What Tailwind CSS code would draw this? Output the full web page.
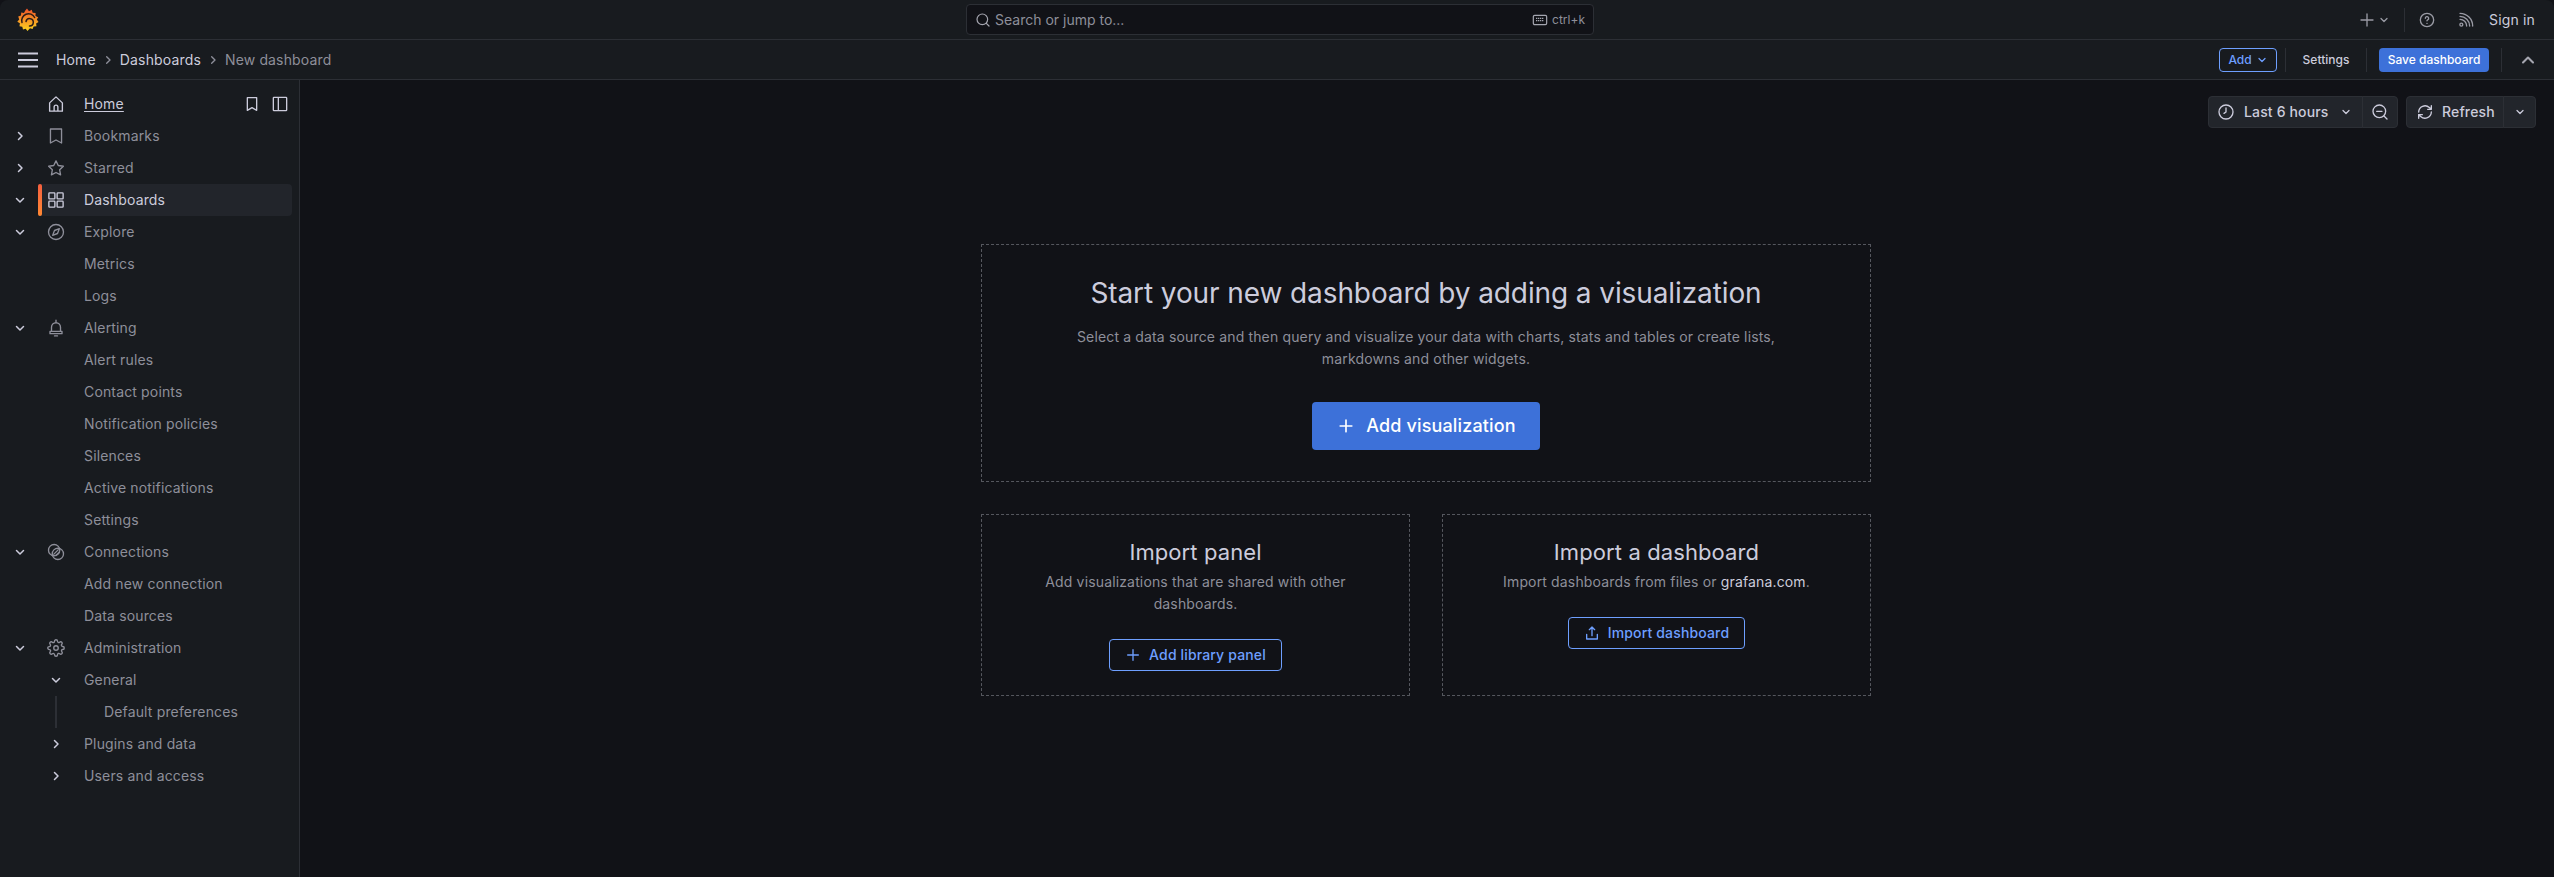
<!doctype html>
<html>
<head>
<meta charset="utf-8"/>
<title>New dashboard - Dashboards - Grafana</title>
<script src="https://cdn.jsdelivr.net/npm/@tailwindcss/browser@4"></script>
</head>
<body class="bg-[#111217] text-[#ccccdc] font-['Inter',sans-serif] text-sm tracking-[0.15px] overflow-hidden">
<div class="h-[877px] flex flex-col">

	<!-- top bar -->
	<div class="h-10 shrink-0 flex items-center bg-[#181b1f] border-b border-[#2c2f35] rounded-t-lg">
		<div class="w-[966px] pl-4 shrink-0">
			<svg class="w-6 h-6" viewBox="0 0 24 24">
				<defs><linearGradient id="gf" x1="0" y1="1" x2="0" y2="0"><stop offset="0" stop-color="#fcd51f"/><stop offset="1" stop-color="#f0532a"/></linearGradient></defs>
				<path fill="url(#gf)" d="M11 .5l2 2.800 2.700-1.500 1 3 2.900 .2-.1 2.900 2.700 1.300-1.400 2.400 1.700 2.300-2.400 1.500 .4 2.800-2.900 .3-1 2.600-2.600-.8L11.500 23 9.700 20.800 7 21.500 6.300 18.700 3.500 18.200 3.900 15.300 1.300 13.700 3.200 11.400 2.200 8.600 5 7.600 5.200 4.600 8 5 9.300 2.500z"/>
				<path fill="none" stroke="#2b1c18" stroke-width="1.500" stroke-linecap="round" d="M6 14.500A6.800 6.800 0 0 1 18.600 9.500"/>
				<path fill="none" stroke="#2b1c18" stroke-width="1.500" stroke-linecap="round" d="M10 13.500A3.700 3.700 0 1 1 13.500 18"/>
			</svg>
		</div>
		<div class="w-[628px] h-[31px] shrink-0 flex items-center justify-between px-2 bg-[#111217] border border-[#2c2f35] rounded-sm text-[#8e8f9a] tracking-normal">
			<div class="flex items-center gap-1">
				<svg class="w-4 h-4" viewBox="0 0 24 24" fill="none" stroke="#a5a6b0" stroke-width="1.800" stroke-linecap="round"><circle cx="11" cy="11" r="8"/><path d="M17 17l4 4"/></svg>
				<span>Search or jump to...</span>
			</div>
			<div class="flex items-center gap-1 text-xs">
				<svg class="w-4 h-4" viewBox="0 0 24 24" fill="none" stroke="#a5a6b0" stroke-width="1.800"><rect x="2" y="5" width="20" height="14" rx="2"/><path d="M6 9.500h12M6 13h12" stroke-dasharray="2 1"/></svg>
				<span>ctrl+k</span>
			</div>
		</div>
		<div class="flex-1 flex items-center justify-end pr-[19px]">
			<svg class="w-4 h-4 text-[#9a9ba5]" viewBox="0 0 24 24" fill="none" stroke="currentColor" stroke-width="2" stroke-linecap="round"><path d="M12 3v18M3 12h18"/></svg>
			<svg class="w-3 h-3 ml-[3px] text-[#9a9ba5]" viewBox="0 0 24 24" fill="none" stroke="currentColor" stroke-width="2.500" stroke-linecap="round" stroke-linejoin="round"><path d="M6 9l6 6 6-6"/></svg>
			<div class="w-px h-6 bg-[#2c2f35] ml-[14px] mr-[14px]"></div>
			<svg class="w-4 h-4 text-[#9a9ba5]" viewBox="0 0 24 24" fill="none" stroke="currentColor" stroke-width="2" stroke-linecap="round"><circle cx="12" cy="12" r="10"/><path d="M9.500 9.500a2.500 2.500 0 1 1 3.500 2.300c-.7.300-1 .8-1 1.500"/><path d="M12 17v.1"/></svg>
			<svg class="w-4 h-4 ml-[23px] text-[#9a9ba5]" viewBox="0 0 24 24" fill="none" stroke="currentColor" stroke-width="2" stroke-linecap="round"><circle cx="5" cy="19" r="2.200"/><path d="M3 11a10 10 0 0 1 10 10M3 6.500A14.500 14.500 0 0 1 17.500 21M3 2a19 19 0 0 1 19 19"/></svg>
			<span class="ml-[15px]">Sign in</span>
		</div>
	</div>

	<!-- breadcrumb bar -->
	<div class="h-10 shrink-0 flex items-center bg-[#181b1f] border-b border-[#2c2f35]">
		<svg class="w-6 h-6 ml-[16px] text-[#ccccdc]" viewBox="0 0 24 24" fill="none" stroke="currentColor" stroke-width="1.800"><path d="M2 5.500h20M2 12h20M2 18.500h20"/></svg>
		<div class="flex items-center ml-[16px]">
			<span>Home</span>
			<svg class="w-4 h-4 mx-[4px] text-[#8e8f9a]" viewBox="0 0 24 24" fill="none" stroke="currentColor" stroke-width="2" stroke-linecap="round" stroke-linejoin="round"><path d="M10 7l5 5-5 5"/></svg>
			<span>Dashboards</span>
			<svg class="w-4 h-4 mx-[4px] text-[#8e8f9a]" viewBox="0 0 24 24" fill="none" stroke="currentColor" stroke-width="2" stroke-linecap="round" stroke-linejoin="round"><path d="M10 7l5 5-5 5"/></svg>
			<span class="text-[#8e8f9a]">New dashboard</span>
		</div>
		<div class="ml-auto flex items-center text-xs font-medium tracking-normal pr-[16px]">
			<div class="w-[58px] h-6 flex items-center justify-center gap-1 border border-[#6e9fff] rounded-sm text-[#6e9fff]">
				Add
				<svg class="w-3 h-3" viewBox="0 0 24 24" fill="none" stroke="currentColor" stroke-width="2.500" stroke-linecap="round" stroke-linejoin="round"><path d="M6 9l6 6 6-6"/></svg>
			</div>
			<div class="w-px h-6 bg-[#2c2f35] ml-2"></div>
			<span class="w-20 text-center">Settings</span>
			<div class="w-px h-6 bg-[#2c2f35] mr-3"></div>
			<div class="w-[110px] h-6 flex items-center justify-center bg-[#3d71d9] rounded-sm text-white">Save dashboard</div>
			<div class="w-px h-6 bg-[#2c2f35] ml-3"></div>
			<svg class="w-5 h-5 ml-4 text-[#a5a6b0]" viewBox="0 0 24 24" fill="none" stroke="currentColor" stroke-width="2.500" stroke-linecap="round" stroke-linejoin="round"><path d="M6 15l6-6 6 6"/></svg>
		</div>
	</div>

	<div class="flex flex-1 min-h-0">
		<!-- sidebar -->
		<div class="w-[300px] shrink-0 bg-[#181b1f] border-r border-[#2c2f35] pt-2 text-[#8e8f9a]">
			<div class="h-8 flex items-center">
				<div class="w-10"></div>
				<div class="w-8 flex justify-center"><svg class="w-[18px] h-[18px]" viewBox="0 0 24 24" fill="none" stroke="#ccccdc" stroke-width="1.800" stroke-linejoin="round"><path d="M3.500 21.500V10.500L12 2.500l8.500 8v11zM9.500 21.500V16a2.500 2.500 0 0 1 5 0v5.500"/></svg></div>
				<span class="ml-3 text-[#ccccdc] underline underline-offset-2">Home</span>
				<svg class="w-4 h-4 ml-auto" viewBox="0 0 24 24" fill="none" stroke="#ccccdc" stroke-width="2" stroke-linejoin="round"><path d="M5 2.500h14v19l-7-4-7 4z"/></svg>
				<svg class="w-4 h-4 ml-3 mr-[11px]" viewBox="0 0 24 24" fill="none" stroke="#ccccdc" stroke-width="2"><rect x="2" y="2" width="20" height="20" rx="1"/><path d="M9.500 2v20"/></svg>
			</div>
			<div class="h-8 flex items-center">
				<div class="w-10 flex justify-center"><svg class="w-3 h-3" viewBox="0 0 24 24" fill="none" stroke="#ccccdc" stroke-width="3" stroke-linecap="round" stroke-linejoin="round"><path d="M9 5l7 7-7 7"/></svg></div>
				<div class="w-8 flex justify-center"><svg class="w-[18px] h-[18px]" viewBox="0 0 24 24" fill="none" stroke="currentColor" stroke-width="1.800" stroke-linejoin="round"><path d="M4.600 2.600h14.800v18.700l-7.400-4-7.400 4z"/></svg></div>
				<span class="ml-3">Bookmarks</span>
			</div>
			<div class="h-8 flex items-center">
				<div class="w-10 flex justify-center"><svg class="w-3 h-3" viewBox="0 0 24 24" fill="none" stroke="#ccccdc" stroke-width="3" stroke-linecap="round" stroke-linejoin="round"><path d="M9 5l7 7-7 7"/></svg></div>
				<div class="w-8 flex justify-center"><svg class="w-[18px] h-[18px]" viewBox="0 0 24 24" fill="none" stroke="currentColor" stroke-width="1.800" stroke-linejoin="round"><path d="M12 2.500l3 6.200 6.800 1-4.900 4.700 1.200 6.800L12 18l-6.100 3.200 1.200-6.800-4.900-4.700 6.800-1z"/></svg></div>
				<span class="ml-3">Starred</span>
			</div>
			<div class="h-8 flex items-center">
				<div class="w-10 flex justify-center"><svg class="w-3 h-3" viewBox="0 0 24 24" fill="none" stroke="#ccccdc" stroke-width="3" stroke-linecap="round" stroke-linejoin="round"><path d="M5 9l7 7 7-7"/></svg></div>
				<div class="flex-1 h-8 mr-[7px] flex items-center bg-[#22252b] rounded-sm -ml-[2px] relative">
					<div class="w-1 h-8 rounded-sm bg-gradient-to-b from-[#f55f3e] to-[#ff8833]"></div>
					<div class="w-8 -ml-[2px] flex justify-center"><svg class="w-[18px] h-[18px]" viewBox="0 0 24 24" fill="none" stroke="#ccccdc" stroke-width="1.800"><rect x="2.500" y="2.500" width="8" height="8" rx="1"/><rect x="13.500" y="2.500" width="8" height="8" rx="1"/><rect x="2.500" y="13.500" width="8" height="8" rx="1"/><rect x="13.500" y="13.500" width="8" height="8" rx="1"/></svg></div>
					<span class="ml-3 text-[#ccccdc]">Dashboards</span>
				</div>
			</div>
			<div class="h-8 flex items-center">
				<div class="w-10 flex justify-center"><svg class="w-3 h-3" viewBox="0 0 24 24" fill="none" stroke="#ccccdc" stroke-width="3" stroke-linecap="round" stroke-linejoin="round"><path d="M5 9l7 7 7-7"/></svg></div>
				<div class="w-8 flex justify-center"><svg class="w-[18px] h-[18px]" viewBox="0 0 24 24" fill="none" stroke="currentColor" stroke-width="1.800" stroke-linejoin="round"><circle cx="12" cy="12" r="10"/><path d="M16.500 7.500l-2.500 6.500-6.500 2.500 2.500-6.500z"/></svg></div>
				<span class="ml-3">Explore</span>
			</div>
			<div class="h-8 flex items-center pl-[84px]">Metrics</div>
			<div class="h-8 flex items-center pl-[84px]">Logs</div>
			<div class="h-8 flex items-center">
				<div class="w-10 flex justify-center"><svg class="w-3 h-3" viewBox="0 0 24 24" fill="none" stroke="#ccccdc" stroke-width="3" stroke-linecap="round" stroke-linejoin="round"><path d="M5 9l7 7 7-7"/></svg></div>
				<div class="w-8 flex justify-center"><svg class="w-[18px] h-[18px]" viewBox="0 0 24 24" fill="none" stroke="currentColor" stroke-width="1.800" stroke-linejoin="round" stroke-linecap="round"><path d="M12 1.500v3M6 16.500V11a6 6 0 0 1 12 0v5.500M4 16.500h16v3H4zM10 22.500h4"/></svg></div>
				<span class="ml-3">Alerting</span>
			</div>
			<div class="h-8 flex items-center pl-[84px]">Alert rules</div>
			<div class="h-8 flex items-center pl-[84px]">Contact points</div>
			<div class="h-8 flex items-center pl-[84px]">Notification policies</div>
			<div class="h-8 flex items-center pl-[84px]">Silences</div>
			<div class="h-8 flex items-center pl-[84px]">Active notifications</div>
			<div class="h-8 flex items-center pl-[84px]">Settings</div>
			<div class="h-8 flex items-center">
				<div class="w-10 flex justify-center"><svg class="w-3 h-3" viewBox="0 0 24 24" fill="none" stroke="#ccccdc" stroke-width="3" stroke-linecap="round" stroke-linejoin="round"><path d="M5 9l7 7 7-7"/></svg></div>
				<div class="w-8 flex justify-center"><svg class="w-[18px] h-[18px]" viewBox="0 0 24 24" fill="none" stroke="currentColor" stroke-width="1.800"><circle cx="9.500" cy="9.500" r="7.500"/><circle cx="14.500" cy="14.500" r="7.500"/><path d="M8.500 15.500l7-7M11.500 17l5.500-5.500"/></svg></div>
				<span class="ml-3">Connections</span>
			</div>
			<div class="h-8 flex items-center pl-[84px]">Add new connection</div>
			<div class="h-8 flex items-center pl-[84px]">Data sources</div>
			<div class="h-8 flex items-center">
				<div class="w-10 flex justify-center"><svg class="w-3 h-3" viewBox="0 0 24 24" fill="none" stroke="#ccccdc" stroke-width="3" stroke-linecap="round" stroke-linejoin="round"><path d="M5 9l7 7 7-7"/></svg></div>
				<div class="w-8 flex justify-center"><svg class="w-[18px] h-[18px]" viewBox="0 0 24 24" fill="none" stroke="currentColor" stroke-width="1.800" stroke-linejoin="round"><circle cx="12" cy="12" r="3"/><path d="M19.400 15a1.650 1.650 0 0 0 .33 1.820l.06.06a2 2 0 0 1 0 2.830 2 2 0 0 1-2.830 0l-.06-.06a1.650 1.650 0 0 0-1.820-.33 1.650 1.650 0 0 0-1 1.510V21a2 2 0 0 1-2 2 2 2 0 0 1-2-2v-.09A1.650 1.650 0 0 0 9 19.400a1.650 1.650 0 0 0-1.820.33l-.06.06a2 2 0 0 1-2.830 0 2 2 0 0 1 0-2.830l.06-.06a1.650 1.650 0 0 0 .33-1.820 1.650 1.650 0 0 0-1.510-1H3a2 2 0 0 1-2-2 2 2 0 0 1 2-2h.09A1.650 1.650 0 0 0 4.600 9a1.650 1.650 0 0 0-.33-1.820l-.06-.06a2 2 0 0 1 0-2.830 2 2 0 0 1 2.830 0l.06.06a1.650 1.650 0 0 0 1.820.33H9a1.650 1.650 0 0 0 1-1.510V3a2 2 0 0 1 2-2 2 2 0 0 1 2 2v.09a1.650 1.650 0 0 0 1 1.510 1.650 1.650 0 0 0 1.820-.33l.06-.06a2 2 0 0 1 2.830 0 2 2 0 0 1 0 2.830l-.06.06a1.650 1.650 0 0 0-.33 1.820V9a1.650 1.650 0 0 0 1.510 1H21a2 2 0 0 1 2 2 2 2 0 0 1-2 2h-.09a1.650 1.650 0 0 0-1.510 1z"/></svg></div>
				<span class="ml-3">Administration</span>
			</div>
			<div class="h-8 flex items-center">
				<div class="w-10"></div>
				<div class="w-8 flex justify-center"><svg class="w-3 h-3" viewBox="0 0 24 24" fill="none" stroke="#ccccdc" stroke-width="3" stroke-linecap="round" stroke-linejoin="round"><path d="M5 9l7 7 7-7"/></svg></div>
				<span class="ml-3">General</span>
			</div>
			<div class="h-8 flex items-center">
				<div class="w-10"></div>
				<div class="w-8 h-8 flex justify-center"><div class="w-0.5 h-8 bg-[#2c2f35]"></div></div>
				<span class="ml-8">Default preferences</span>
			</div>
			<div class="h-8 flex items-center">
				<div class="w-10"></div>
				<div class="w-8 flex justify-center"><svg class="w-3 h-3" viewBox="0 0 24 24" fill="none" stroke="#ccccdc" stroke-width="3" stroke-linecap="round" stroke-linejoin="round"><path d="M9 5l7 7-7 7"/></svg></div>
				<span class="ml-3">Plugins and data</span>
			</div>
			<div class="h-8 flex items-center">
				<div class="w-10"></div>
				<div class="w-8 flex justify-center"><svg class="w-3 h-3" viewBox="0 0 24 24" fill="none" stroke="#ccccdc" stroke-width="3" stroke-linecap="round" stroke-linejoin="round"><path d="M9 5l7 7-7 7"/></svg></div>
				<span class="ml-3">Users and access</span>
			</div>
		</div>

		<!-- main -->
		<div class="flex-1 min-w-0">
			<div class="h-8 mt-4 pr-[18px] flex justify-end font-medium">
				<div class="h-8 w-[155px] flex items-center bg-[#22252b] border border-[#2c2f35] rounded-l-sm pl-[9px]">
					<svg class="w-4 h-4" viewBox="0 0 24 24" fill="none" stroke="currentColor" stroke-width="2" stroke-linecap="round"><circle cx="12" cy="12" r="10.500"/><path d="M12 6v6l-3 2"/></svg>
					<span class="ml-2.5">Last 6 hours</span>
					<svg class="w-3 h-3 ml-auto mr-2.5" viewBox="0 0 24 24" fill="none" stroke="currentColor" stroke-width="2.500" stroke-linecap="round" stroke-linejoin="round"><path d="M6 9l6 6 6-6"/></svg>
				</div>
				<div class="h-8 w-9 -ml-px flex items-center justify-center bg-[#22252b] border border-[#2c2f35] rounded-r-sm">
					<svg class="w-4 h-4" viewBox="0 0 24 24" fill="none" stroke="currentColor" stroke-width="2" stroke-linecap="round"><circle cx="11" cy="11" r="9.500"/><path d="M7 11h8M18 18l4.500 4.500"/></svg>
				</div>
				<div class="h-8 w-[98px] ml-2 flex items-center bg-[#22252b] border border-[#2c2f35] rounded-l-sm pl-2.5">
					<svg class="w-4 h-4" viewBox="0 0 24 24" fill="none" stroke="currentColor" stroke-width="2" stroke-linecap="round" stroke-linejoin="round"><path d="M2.500 12a9.500 9.500 0 0 1 16-6.700L21.500 8M21.500 2.500V8h-5.500M21.500 12a9.500 9.500 0 0 1-16 6.700L2.500 16M2.500 21.500V16H8"/></svg>
					<span class="ml-[9px]">Refresh</span>
				</div>
				<div class="h-8 w-[33px] -ml-px flex items-center justify-center bg-[#22252b] border border-[#2c2f35] rounded-r-sm">
					<svg class="w-3 h-3" viewBox="0 0 24 24" fill="none" stroke="currentColor" stroke-width="2.500" stroke-linecap="round" stroke-linejoin="round"><path d="M6 9l6 6 6-6"/></svg>
				</div>
			</div>

			<div class="w-[890px] ml-[681px] mt-[116px]">
				<div class="h-[238px] border border-dashed border-[#55575e] flex flex-col items-center pt-[26px]">
					<h1 class="text-[28px] leading-[44px] font-normal tracking-[-0.1px]">Start your new dashboard by adding a visualization</h1>
					<p class="w-[720px] mt-[11px] text-center text-[#8e8f9a] leading-[22px]">Select a data source and then query and visualize your data with charts, stats and tables or create lists, markdowns and other widgets.</p>
					<div class="mt-[32px] w-[228px] h-12 flex items-center justify-center gap-[10px] bg-[#3d71d9] rounded-sm text-white text-lg font-medium">
						<svg class="w-5 h-5" viewBox="0 0 24 24" fill="none" stroke="currentColor" stroke-width="2" stroke-linecap="round"><path d="M12 5v14M5 12h14"/></svg>
						Add visualization
					</div>
				</div>
				<div class="grid grid-cols-2 gap-8 mt-8">
					<div class="h-[182px] border border-dashed border-[#55575e] flex flex-col items-center pt-[20px]">
						<h2 class="text-[22px] leading-[34px] font-normal tracking-[0.1px]">Import panel</h2>
						<p class="w-[340px] mt-0.5 text-center text-[#8e8f9a] leading-[22px]">Add visualizations that are shared with other dashboards.</p>
						<div class="mt-[24px] w-[173px] h-8 flex items-center justify-center gap-2 border border-[#6e9fff] rounded-sm text-[#6e9fff] font-medium">
							<svg class="w-4 h-4" viewBox="0 0 24 24" fill="none" stroke="currentColor" stroke-width="2" stroke-linecap="round"><path d="M12 4v16M4 12h16"/></svg>
							Add library panel
						</div>
					</div>
					<div class="h-[182px] border border-dashed border-[#55575e] flex flex-col items-center pt-[20px]">
						<h2 class="text-[22px] leading-[34px] font-normal tracking-[0.1px]">Import a dashboard</h2>
						<p class="mt-0.5 text-center text-[#8e8f9a] leading-[22px]">Import dashboards from files or <span class="text-[#ccccdc]">grafana.com</span>.</p>
						<div class="mt-[24px] w-[177px] h-8 flex items-center justify-center gap-2 border border-[#6e9fff] rounded-sm text-[#6e9fff] font-medium">
							<svg class="w-4 h-4" viewBox="0 0 24 24" fill="none" stroke="currentColor" stroke-width="2" stroke-linecap="round" stroke-linejoin="round"><path d="M4 14v7h16v-7M12 16V3M8 7l4-4 4 4"/></svg>
							Import dashboard
						</div>
					</div>
				</div>
			</div>
		</div>
	</div>
</div>
</body>
</html>
